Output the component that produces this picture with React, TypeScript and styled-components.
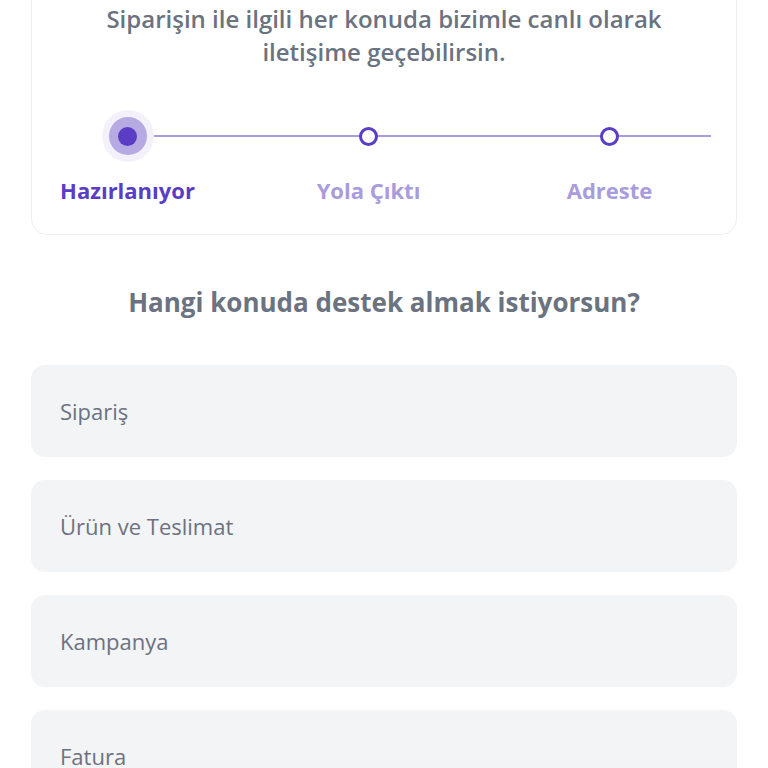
import React from "react";
import styled, { createGlobalStyle } from "styled-components";

const GlobalStyle = createGlobalStyle`
  body {
    margin: 0;
    background: #ffffff;
    font-family: "Open Sans", "Noto Sans", sans-serif;
  }
`;

const Page = styled.div`
  padding: 0 31px 40px;
  overflow: hidden;
  height: 768px;
  box-sizing: border-box;
`;

const Card = styled.div`
  margin-top: -40px;
  padding: 41px 0 30px;
  border: 1px solid #efedf8;
  border-radius: 16px;
  background: #fff;
`;

const Intro = styled.p`
  margin: 0 auto;
  width: 620px;
  text-align: center;
  font-size: 24px;
  line-height: 33px;
  font-weight: 600;
  color: #6b7280;
`;

const Stepper = styled.div`
  position: relative;
  margin: 42px 0 0 -25px;
  display: grid;
  grid-template-columns: repeat(3, 241px);
  grid-template-rows: 52px 28px;
  row-gap: 14px;

  &::before {
    content: "";
    position: absolute;
    top: 25px;
    left: 121px;
    width: 583px;
    height: 2px;
    background: #a99ce0;
  }
`;

const DotCell = styled.div`
  display: flex;
  align-items: center;
  justify-content: center;
  position: relative;
  z-index: 1;
`;

const ActiveDot = styled.span`
  width: 52px;
  height: 52px;
  border-radius: 50%;
  background: #f4f1fc;
  display: flex;
  align-items: center;
  justify-content: center;

  &::before {
    content: "";
    width: 38px;
    height: 38px;
    border-radius: 50%;
    background: #b6aae2;
    display: flex;
  }

  &::after {
    content: "";
    position: absolute;
    width: 19px;
    height: 19px;
    border-radius: 50%;
    background: #5a3dc4;
  }
`;

const HollowDot = styled.span`
  width: 13px;
  height: 13px;
  border-radius: 50%;
  border: 3px solid #5a3dc4;
  background: #fff;
`;

const StepLabel = styled.div<{ $active?: boolean }>`
  text-align: center;
  font-size: 22px;
  line-height: 28px;
  font-weight: 700;
  color: ${(p) => (p.$active ? "#5a3dc4" : "#a99cdc")};
`;

const Heading = styled.h2`
  margin: 50px 0 46px;
  text-align: center;
  font-size: 26px;
  line-height: 34px;
  font-weight: 700;
  color: #6b7280;
`;

const TopicList = styled.div`
  display: flex;
  flex-direction: column;
  gap: 23px;
`;

const Topic = styled.button`
  height: 92px;
  flex-shrink: 0;
  border: none;
  border-radius: 14px;
  background: #f3f4f6;
  padding: 0 29px;
  text-align: left;
  font-family: inherit;
  font-size: 22px;
  color: #6b7280;
  cursor: pointer;
`;

const steps = ["Hazırlanıyor", "Yola Çıktı", "Adreste"];
const topics = ["Sipariş", "Ürün ve Teslimat", "Kampanya", "Fatura"];

export default function App() {
  return (
    <>
      <GlobalStyle />
      <Page>
        <Card>
          <Intro>
            Siparişin ile ilgili her konuda bizimle canlı olarak iletişime
            geçebilirsin.
          </Intro>
          <Stepper>
            {steps.map((s, i) => (
              <DotCell key={s}>{i === 0 ? <ActiveDot /> : <HollowDot />}</DotCell>
            ))}
            {steps.map((s, i) => (
              <StepLabel key={s} $active={i === 0}>
                {s}
              </StepLabel>
            ))}
          </Stepper>
        </Card>
        <Heading>Hangi konuda destek almak istiyorsun?</Heading>
        <TopicList>
          {topics.map((t) => (
            <Topic key={t}>{t}</Topic>
          ))}
        </TopicList>
      </Page>
    </>
  );
}
